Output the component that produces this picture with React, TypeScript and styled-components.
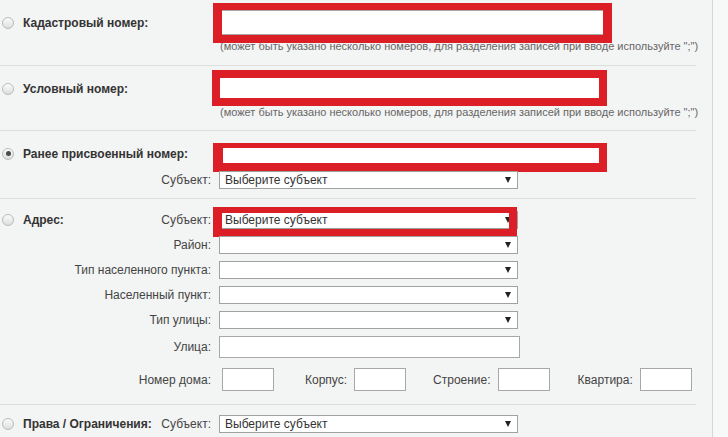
import React from "react";
import styled, { createGlobalStyle } from "styled-components";

const Global = createGlobalStyle`
  html, body { margin: 0; padding: 0; }
  body {
    background: #f3f4f4;
    font-family: "Liberation Sans", Arial, sans-serif;
    font-size: 12px;
    color: #333;
  }
`;

const Page = styled.div`
  display: flex;
  width: 728px;
  height: 437px;
  overflow: hidden;
`;

const Main = styled.div`
  width: 713px;
  box-sizing: border-box;
  border-right: 1px solid #d6d8d8;
  padding-right: 16px;
`;

const Side = styled.div`
  flex: 1;
  background: #f7f8f8;
`;

const Section = styled.div<{ $pt: number; $pb: number; $gap: number }>`
  display: flex;
  flex-direction: column;
  gap: ${(p) => p.$gap}px;
  padding: ${(p) => p.$pt}px 0 ${(p) => p.$pb}px 0;
  border-bottom: 1px solid #dcdede;
`;

const Line = styled.div<{ $mt?: number }>`
  display: grid;
  grid-template-columns: 212px 1fr;
  column-gap: 7px;
  align-items: center;
  margin-top: ${(p) => p.$mt ?? 0}px;
`;

const LabelCell = styled.div`
  display: flex;
  align-items: center;
  justify-content: space-between;
  white-space: nowrap;
`;

const Lead = styled.div`
  display: flex;
  align-items: center;
`;

const Radio = styled.span<{ $checked?: boolean }>`
  position: relative;
  display: inline-block;
  box-sizing: border-box;
  width: 12px;
  height: 12px;
  margin: 0 9px 0 2px;
  border-radius: 50%;
  border: 1px solid #b9bcbc;
  background: linear-gradient(#fbfbfb, #dcdede);
  &::after {
    content: "";
    display: ${(p) => (p.$checked ? "block" : "none")};
    position: absolute;
    left: 2.5px;
    top: 2.5px;
    width: 5px;
    height: 5px;
    border-radius: 50%;
    background: #4a4c4c;
  }
`;

const MainLabel = styled.span`
  font-weight: bold;
  color: #333;
`;

const SubLabel = styled.span`
  color: #444;
  padding-right: 1px;
`;

const Field = styled.div`
  position: relative;
  display: flex;
  flex-direction: column;
`;

const TextInput = styled.div<{ $w: number; $h: number }>`
  box-sizing: border-box;
  width: ${(p) => p.$w}px;
  height: ${(p) => p.$h}px;
  background: #fff;
  border: 1px solid #a7a9a9;
`;

const Hint = styled.div`
  margin-left: 1px;
  font-size: 11px;
  line-height: 13px;
  color: #666;
  white-space: nowrap;
`;

const SelectBox = styled.div`
  box-sizing: border-box;
  width: 299px;
  height: 18px;
  background: #fff;
  border: 1px solid #a0a2a2;
  display: flex;
  align-items: center;
  justify-content: space-between;
  padding: 0 6px 0 5px;
  color: #333;
  font-size: 12px;
`;

const Arrow = styled.span`
  width: 0;
  height: 0;
  border-left: 3px solid transparent;
  border-right: 3px solid transparent;
  border-top: 6px solid #222;
`;

const Mark = styled.div<{ $l: number; $t: number; $w: number; $h: number; $bw: string }>`
  position: absolute;
  left: ${(p) => p.$l}px;
  top: ${(p) => p.$t}px;
  width: ${(p) => p.$w}px;
  height: ${(p) => p.$h}px;
  box-sizing: border-box;
  border-style: solid;
  border-color: #dc1f27;
  border-width: ${(p) => p.$bw};
  pointer-events: none;
`;

const HouseRow = styled.div`
  display: flex;
  align-items: center;
  margin-left: 3px;
`;

const HouseLabel = styled.span<{ $ml: number }>`
  color: #444;
  margin: 0 7px 0 ${(p) => p.$ml}px;
`;

const hint = '(может быть указано несколько номеров, для разделения записей при вводе используйте ";")';

const Select = ({ value = "" }: { value?: string }) => (
  <SelectBox>
    <span>{value}</span>
    <Arrow />
  </SelectBox>
);

const SubRow = ({ label, children, mt }: { label: string; children: React.ReactNode; mt?: number }) => (
  <Line $mt={mt}>
    <LabelCell>
      <span />
      <SubLabel>{label}</SubLabel>
    </LabelCell>
    <Field>{children}</Field>
  </Line>
);

const HintRow = () => (
  <Line>
    <span />
    <Hint>{hint}</Hint>
  </Line>
);

export default function App() {
  return (
    <>
      <Global />
      <Page>
        <Main>
          <Section $pt={10} $pb={12} $gap={5}>
            <Line>
              <LabelCell>
                <Lead>
                  <Radio />
                  <MainLabel>Кадастровый номер:</MainLabel>
                </Lead>
              </LabelCell>
              <Field>
                <TextInput $w={385} $h={25} />
                <Mark $l={-6} $t={-7} $w={399} $h={40} $bw="7px 9px 8px 9px" />
              </Field>
            </Line>
            <HintRow />
          </Section>

          <Section $pt={10} $pb={11} $gap={5}>
            <Line>
              <LabelCell>
                <Lead>
                  <Radio />
                  <MainLabel>Условный номер:</MainLabel>
                </Lead>
              </LabelCell>
              <Field>
                <TextInput $w={382} $h={25} />
                <Mark $l={-7} $t={-6} $w={395} $h={36} $bw="8px" />
              </Field>
            </Line>
            <HintRow />
          </Section>

          <Section $pt={12} $pb={9} $gap={7}>
            <Line>
              <LabelCell>
                <Lead>
                  <Radio $checked />
                  <MainLabel>Ранее присвоенный номер:</MainLabel>
                </Lead>
              </LabelCell>
              <Field>
                <TextInput $w={382} $h={21} />
                <Mark $l={-6} $t={0} $w={394} $h={29} $bw="5px 8px 9px 10px" />
              </Field>
            </Line>
            <SubRow label="Субъект:">
              <Select value="Выберите субъект" />
            </SubRow>
          </Section>

          <Section $pt={12} $pb={13} $gap={7}>
            <Line>
              <LabelCell>
                <Lead>
                  <Radio />
                  <MainLabel>Адрес:</MainLabel>
                </Lead>
                <SubLabel>Субъект:</SubLabel>
              </LabelCell>
              <Field>
                <Select value="Выберите субъект" />
                <Mark $l={-6} $t={-4} $w={304} $h={30} $bw="6px 8px 8px 9px" />
              </Field>
            </Line>
            <SubRow label="Район:">
              <Select />
            </SubRow>
            <SubRow label="Тип населенного пункта:">
              <Select />
            </SubRow>
            <SubRow label="Населенный пункт:">
              <Select />
            </SubRow>
            <SubRow label="Тип улицы:">
              <Select />
            </SubRow>
            <SubRow label="Улица:">
              <TextInput $w={301} $h={22} />
            </SubRow>
            <Line $mt={3}>
              <LabelCell>
                <span />
                <SubLabel>Номер дома:</SubLabel>
              </LabelCell>
              <HouseRow>
                <TextInput $w={52} $h={23} />
                <HouseLabel $ml={31}>Корпус:</HouseLabel>
                <TextInput $w={52} $h={23} />
                <HouseLabel $ml={27}>Строение:</HouseLabel>
                <TextInput $w={52} $h={23} />
                <HouseLabel $ml={28}>Квартира:</HouseLabel>
                <TextInput $w={52} $h={23} />
              </HouseRow>
            </Line>
          </Section>

          <Section $pt={10} $pb={10} $gap={0}>
            <Line>
              <LabelCell>
                <Lead>
                  <Radio />
                  <MainLabel>Права / Ограничения:</MainLabel>
                </Lead>
                <SubLabel>Субъект:</SubLabel>
              </LabelCell>
              <Field>
                <Select value="Выберите субъект" />
              </Field>
            </Line>
          </Section>
        </Main>
        <Side />
      </Page>
    </>
  );
}
